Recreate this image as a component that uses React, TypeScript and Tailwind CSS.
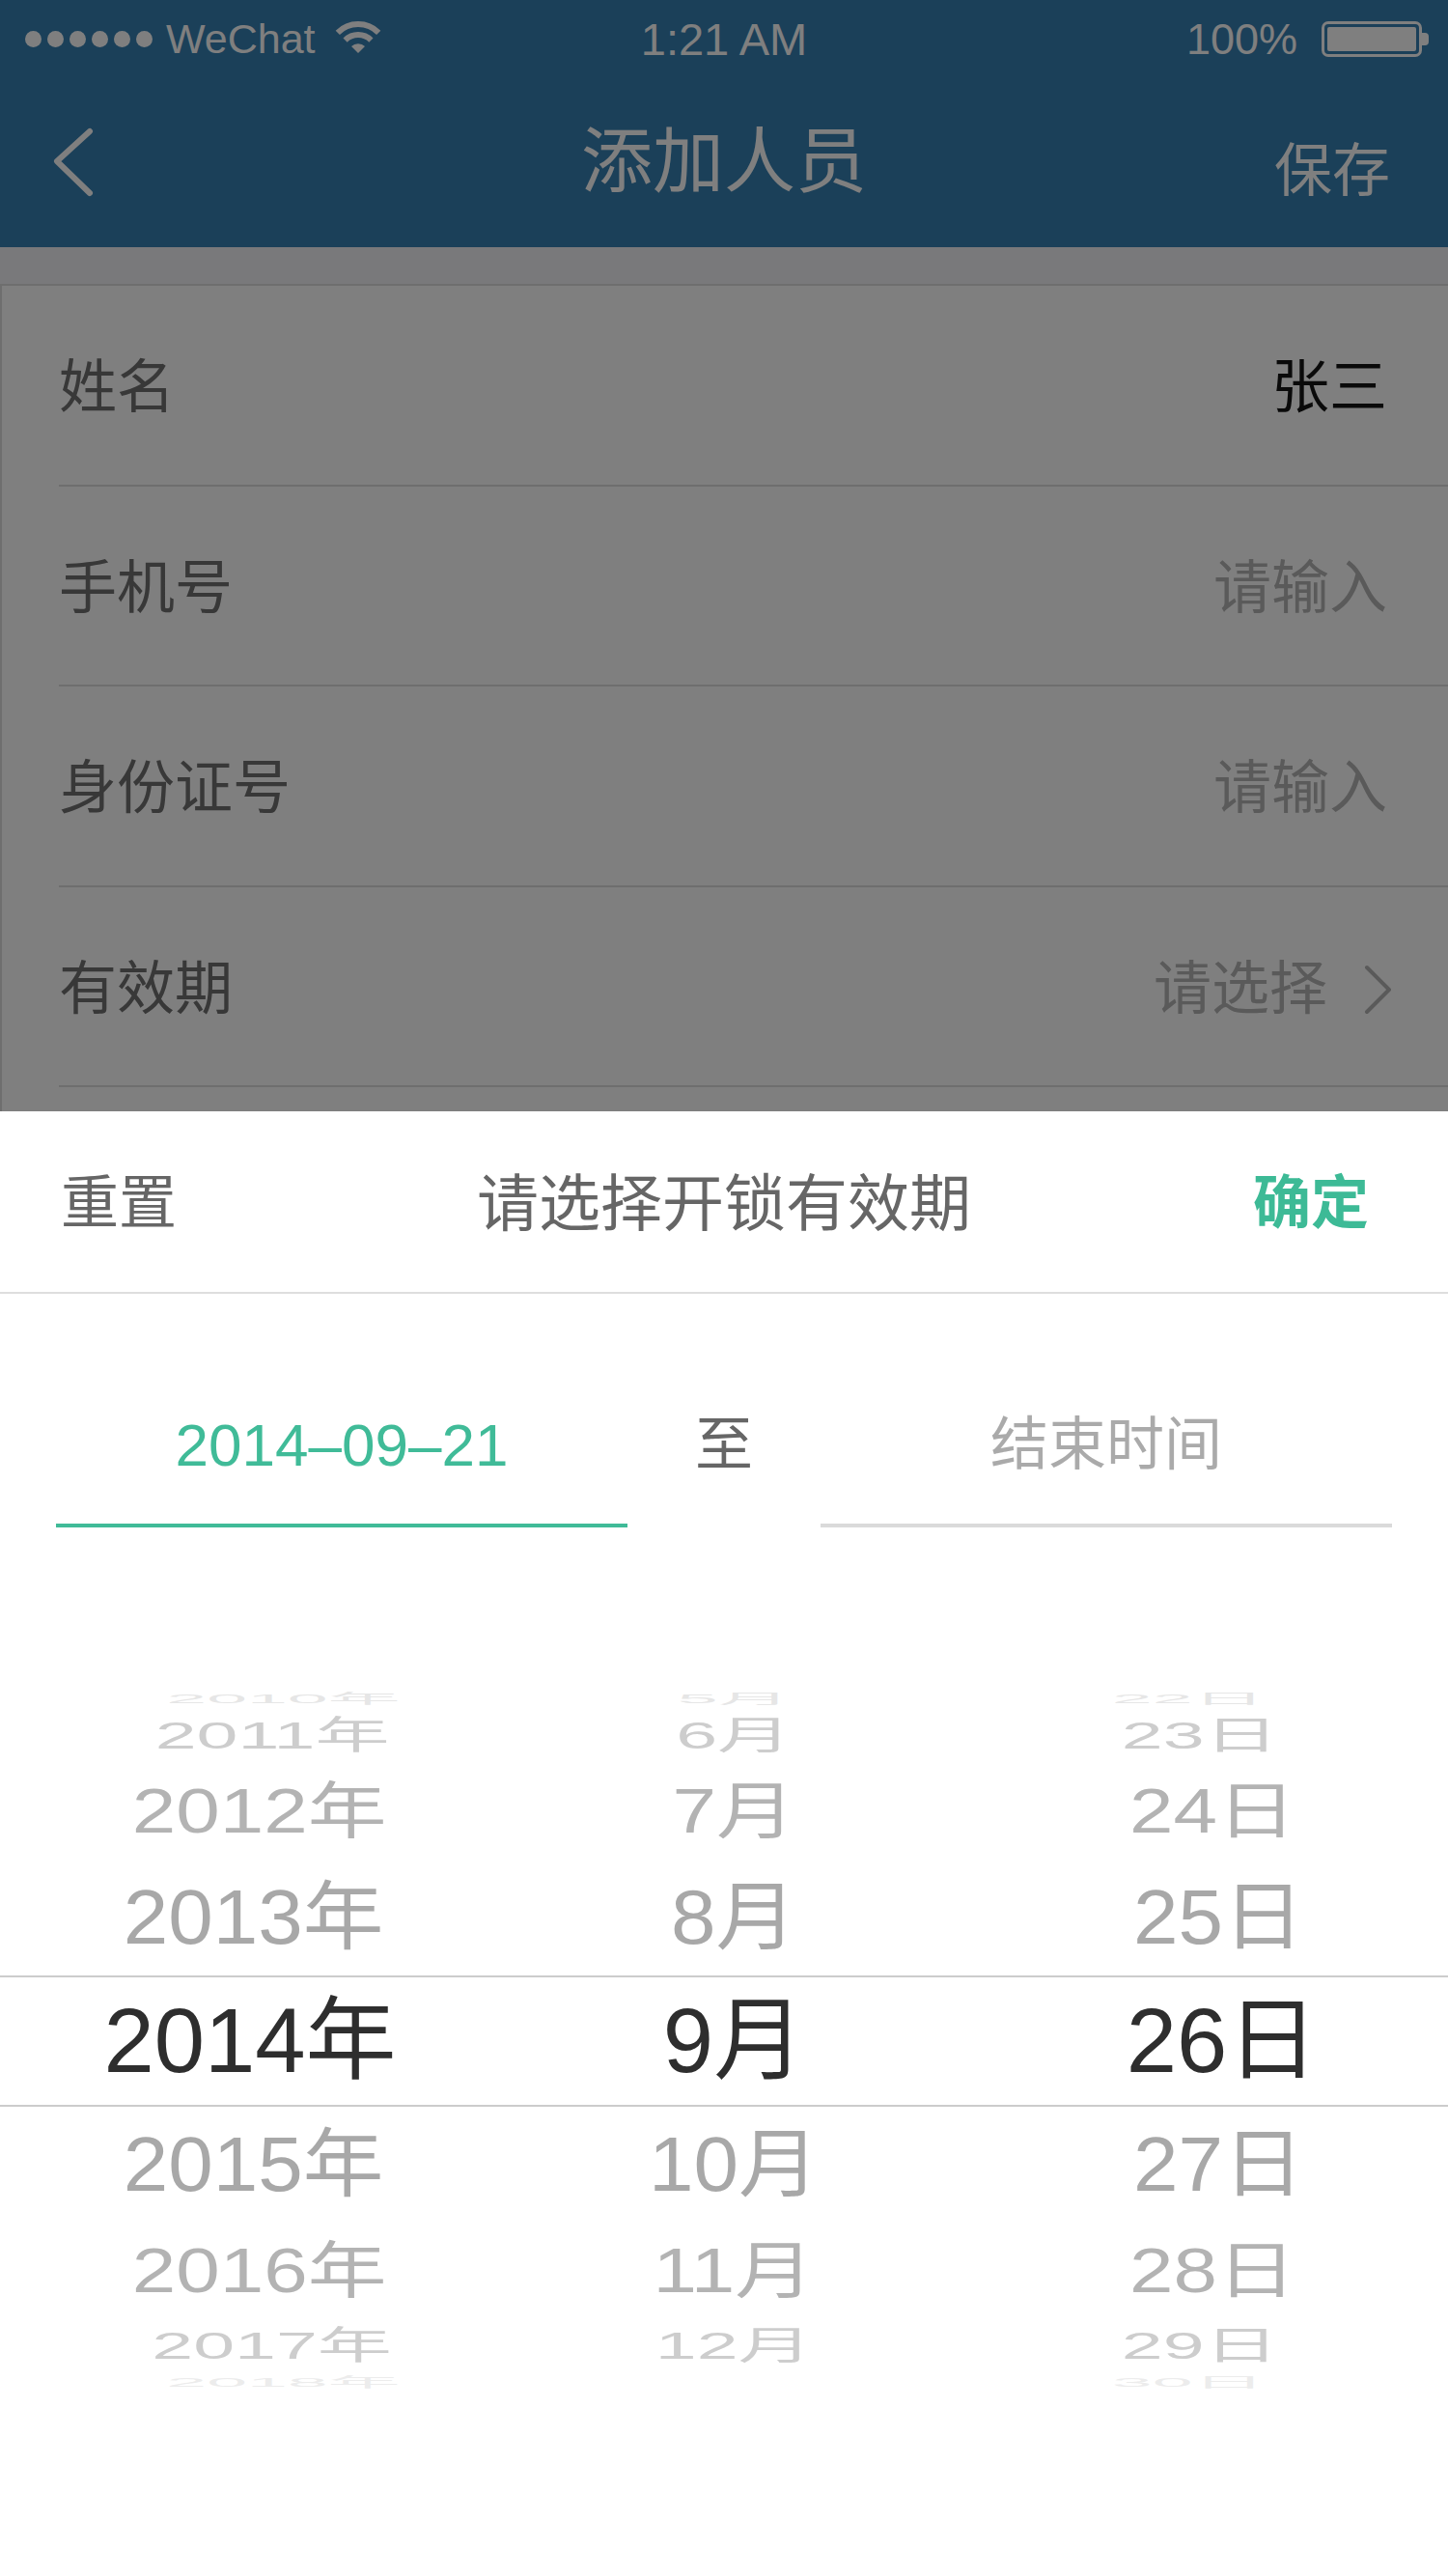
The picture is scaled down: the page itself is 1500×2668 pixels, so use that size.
import React from "react";

type Row = { k: number; h: number; sx: number; sy: number; c: string };

const ROWS: Row[] = [
  { k: -4, h: 20, sx: 0.8, sy: 0.14, c: "#e6e6e6" },
  { k: -3, h: 56, sx: 0.82, sy: 0.42, c: "#cdcdcd" },
  { k: -2, h: 100, sx: 0.87, sy: 0.68, c: "#b3b3b3" },
  { k: -1, h: 120, sx: 0.89, sy: 0.84, c: "#a8a8a8" },
  { k: 0, h: 136, sx: 1, sy: 1, c: "#2e2e2e" },
  { k: 1, h: 120, sx: 0.89, sy: 0.84, c: "#a8a8a8" },
  { k: 2, h: 100, sx: 0.87, sy: 0.68, c: "#b3b3b3" },
  { k: 3, h: 56, sx: 0.82, sy: 0.42, c: "#cdcdcd" },
  { k: 4, h: 20, sx: 0.8, sy: 0.14, c: "#ececec" },
];

const SHIFT = [0, 4, 10, 23, 35];

const YEARS = ["2010年", "2011年", "2012年", "2013年", "2014年", "2015年", "2016年", "2017年", "2018年"];
const MONTHS = ["5月", "6月", "7月", "8月", "9月", "10月", "11月", "12月", ""];
const DAYS = ["22日", "23日", "24日", "25日", "26日", "27日", "28日", "29日", "30日"];

function Cell({ text, row, dir, pad }: { text: string; row: Row; dir: number; pad: string }) {
  const dx = dir * SHIFT[Math.abs(row.k)];
  const inner = row.k === 0 ? row.h - 4 : row.h;
  return (
    <div className={`flex items-center justify-center overflow-visible ${pad}`}>
      <span
        className="block whitespace-nowrap text-[94px]"
        style={{
          lineHeight: `${inner}px`,
          height: inner,
          transform: `translateX(${dx}px) scale(${row.sx}, ${row.sy})`,
          color: row.c,
        }}
      >
        {text}
      </span>
    </div>
  );
}

function Wifi() {
  return (
    <svg width="48" height="36" viewBox="0 0 48 36" fill="none">
      <path d="M2.8 11.8 A30 30 0 0 1 45.2 11.8" stroke="#ffffff" strokeWidth="6" />
      <path d="M10.6 19.6 A19 19 0 0 1 37.4 19.6" stroke="#ffffff" strokeWidth="6" />
      <path d="M24 33 L17 26 A10 10 0 0 1 31 26 Z" fill="#ffffff" />
    </svg>
  );
}

function FormRow({ label, value, valueClass, chevron }: { label?: string; value?: string; valueClass?: string; chevron?: boolean }) {
  return (
    <div className="ml-[59px] pr-[63px] pt-[7px] h-[207.5px] flex items-center justify-between border-b-2 border-[#dcdcdc]">
      <span className="text-[60px] leading-none text-[#717171]">{label}</span>
      <div className="flex items-center">
        <span className={`text-[60px] leading-none ${valueClass ?? ""}`}>{value}</span>
        {chevron && (
          <svg width="30" height="52" viewBox="0 0 30 52" fill="none" className="ml-[38px] -mr-[6px]">
            <polyline points="3,3 26,26 3,49" stroke="#b4b4b4" strokeWidth="4" strokeLinecap="round" strokeLinejoin="round" />
          </svg>
        )}
      </div>
    </div>
  );
}

export default function App() {
  return (
    <div className="relative w-[1500px] h-[2668px] overflow-hidden bg-[#f3f3f7] font-['Liberation_Sans','Noto_Sans_CJK_SC',sans-serif]">
      {/* Underlying page */}
      <div className="bg-[#3680b2] text-white">
        <div className="h-[80px] grid grid-cols-3 items-center px-[26px]">
          <div className="flex items-center">
            <div className="flex items-center gap-[6px]">
              {[0, 1, 2, 3, 4, 5].map((i) => (
                <span key={i} className="block w-[17px] h-[17px] rounded-full bg-white" />
              ))}
            </div>
            <span className="ml-[14px] text-[43px] leading-none">WeChat</span>
            <span className="ml-[20px] flex">
              <Wifi />
            </span>
          </div>
          <div className="text-center text-[47px] leading-none">1:21 AM</div>
          <div className="flex items-center justify-end -mr-[6px]">
            <span className="text-[45px] leading-none">100%</span>
            <div className="ml-[25px] flex items-center">
              <div className="w-[104px] h-[37px] border-[3px] border-white rounded-[7px] p-[3px]">
                <div className="w-full h-full bg-white rounded-[2px]" />
              </div>
              <div className="w-[7px] h-[13px] bg-white rounded-r-[4px]" />
            </div>
          </div>
        </div>
        <div className="h-[176px] grid grid-cols-[1fr_auto_1fr] items-center">
          <div className="pl-[54px] flex">
            <svg width="44" height="72" viewBox="0 0 44 72" fill="none">
              <polyline points="39,4 5,35 39,68" stroke="#ffffff" strokeWidth="6" strokeLinecap="round" strokeLinejoin="round" />
            </svg>
          </div>
          <div className="text-[74px] leading-none">添加人员</div>
          <div className="justify-self-end pr-[60px] pt-[20px] text-[60px] leading-none">保存</div>
        </div>
      </div>
      <div className="h-[38px]" />
      <div className="bg-white border-t-2 border-l-2 border-[#dcdcdc]">
        <FormRow label="姓名" value="张三" valueClass="text-[#141414]" />
        <FormRow label="手机号" value="请输入" valueClass="text-[#b4b4b4]" />
        <FormRow label="身份证号" value="请输入" valueClass="text-[#b4b4b4]" />
        <FormRow label="有效期" value="请选择" valueClass="text-[#b4b4b4]" chevron />
        <FormRow />
      </div>

      {/* Mask */}
      <div className="absolute inset-0 bg-black/50" />

      {/* Bottom sheet */}
      <div className="absolute left-0 right-0 bottom-0 h-[1517px] bg-white flex flex-col">
        <div className="h-[189px] grid grid-cols-[1fr_auto_1fr] items-center border-b-2 border-[#dedede]">
          <div className="pl-[63px] pt-[4px] text-[60px] leading-none text-[#666666]">重置</div>
          <div className="pt-[4px] text-[64px] leading-none text-[#666666]">请选择开锁有效期</div>
          <div className="justify-self-end pr-[82px] pt-[4px] text-[60px] leading-none font-bold text-[#3dba96]">确定</div>
        </div>

        <div className="pt-[127px] px-[58px] flex items-start">
          <div className="w-[592px] flex flex-col items-center">
            <div className="h-[60px] leading-[60px] text-[62px] text-[#40bb98]">2014–09–21</div>
            <div className="mt-[51px] h-[4px] w-full bg-[#40bb98]" />
          </div>
          <div className="flex-1 flex justify-center">
            <div className="h-[60px] leading-[60px] text-[60px] text-[#666666]">至</div>
          </div>
          <div className="w-[592px] flex flex-col items-center">
            <div className="h-[60px] leading-[60px] text-[60px] text-[#aaaaaa]">结束时间</div>
            <div className="mt-[51px] h-[4px] w-full bg-[#dadada]" />
          </div>
        </div>

        <div className="mt-[168px] flex flex-col">
          {ROWS.map((row, i) => (
            <div
              key={row.k}
              className={`grid grid-cols-3 overflow-visible ${row.k === 0 ? "border-y-2 border-[#cccccc]" : ""}`}
              style={{ height: row.h }}
            >
              <Cell text={YEARS[i]} row={row} dir={1} pad="pl-[18px]" />
              <Cell text={MONTHS[i]} row={row} dir={0} pad="pl-[20px]" />
              <Cell text={DAYS[i]} row={row} dir={-1} pad="pl-[32px]" />
            </div>
          ))}
        </div>
      </div>
    </div>
  );
}
